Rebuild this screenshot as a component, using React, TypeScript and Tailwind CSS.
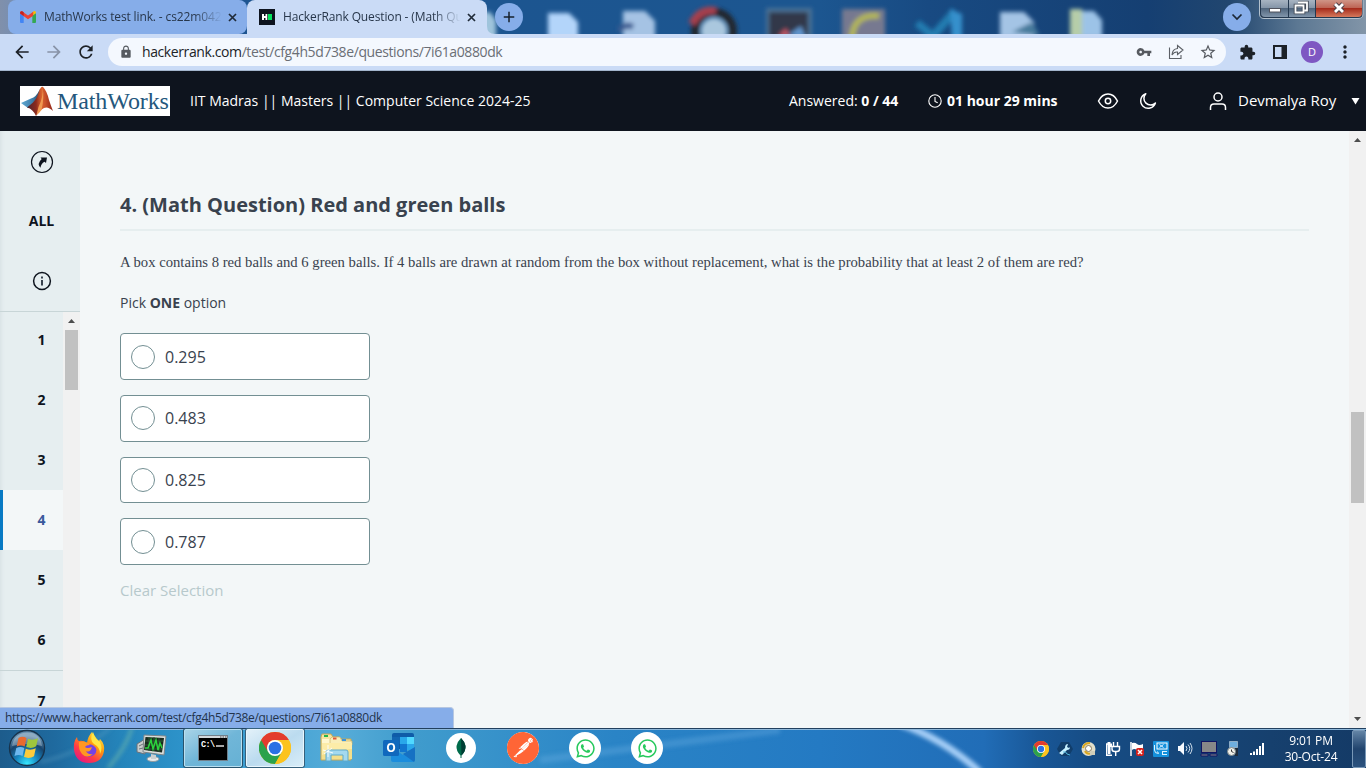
import React from "react";
import {
  MdArrowBack,
  MdArrowForward,
  MdRefresh,
  MdLock,
  MdVpnKey,
  MdStarBorder,
  MdExtension,
  MdMoreVert,
  MdAdd,
} from "react-icons/md";
import { FaWhatsapp } from "react-icons/fa";
import { SiPostman } from "react-icons/si";

const UI = "font-['Open_Sans','Noto_Sans',sans-serif]";

/* ---------- Desktop behind the tab strip ---------- */

function Wallpaper() {
  return (
    <svg className="absolute inset-0" width="1366" height="34" viewBox="0 0 1366 34" preserveAspectRatio="none">
      <defs>
        <linearGradient id="wall" x1="0" x2="1" y1="0" y2="0">
          <stop offset="0" stopColor="#8090ab" />
          <stop offset="0.02" stopColor="#6f8db8" />
          <stop offset="0.17" stopColor="#1d5490" />
          <stop offset="0.36" stopColor="#1c5590" />
          <stop offset="0.6" stopColor="#1c5690" />
          <stop offset="0.68" stopColor="#184a82" />
          <stop offset="0.84" stopColor="#153f72" />
          <stop offset="0.9" stopColor="#21466f" />
          <stop offset="0.95" stopColor="#5c7893" />
          <stop offset="1" stopColor="#8295a8" />
        </linearGradient>
        <filter id="soft" x="-20%" y="-20%" width="140%" height="140%">
          <feGaussianBlur stdDeviation="2.1" />
        </filter>
      </defs>
      <rect width="1366" height="34" fill="url(#wall)" />
      <g filter="url(#soft)">
        <path d="M478 12h12l6 8v18h-18z" fill="#9fc4dc" />
        <path d="M548 13h21l9 9v18h-30z" fill="#b3d5fa" />
        <path d="M623 11h22l10 10v19h-32z" fill="#a5c3e4" />
        <path d="M619 31q6-8 14-4" stroke="#3b5c92" strokeWidth="6" fill="none" />
        <circle cx="714" cy="31" r="19" fill="none" stroke="#22252f" strokeWidth="8" />
        <path d="M692 24q8-16 24-13" fill="none" stroke="#a63f4d" strokeWidth="8" />
        <circle cx="714" cy="31" r="13" fill="#aac7de" />
        <rect x="766" y="8" width="46" height="32" fill="#4b7296" />
        <rect x="769" y="12" width="39" height="26" fill="#303948" />
        <path d="M778 36l8-8 4 9z" fill="#c25766" />
        <path d="M788 35l13-9 5 12z" fill="#6195cf" />
        <rect x="842" y="9" width="43" height="30" fill="#777990" />
        <path d="M852 38q1-24 27-22" fill="none" stroke="#b3b657" strokeWidth="6" />
        <path d="M917 23l16 13 22-25" fill="none" stroke="#217bb0" strokeWidth="8" />
        <path d="M950 9l12 5v25h-10z" fill="#3590cc" />
        <path d="M1000 12h24l10 10v16h-34z" fill="#a4c4e5" />
        <path d="M1012 32l20-10 8 14z" fill="#477a9c" />
        <path d="M1070 9h12v29h-12z" fill="#b6cda9" />
        <path d="M1082 11h12l8 9v18h-20z" fill="#9cc3e7" />
      </g>
    </svg>
  );
}

function GmailIcon() {
  return (
    <svg width="16" height="12" viewBox="0 0 16 12">
      <path d="M0 2v9q0 1 1 1h2.700V4.800z" fill="#4285f4" />
      <path d="M16 2v9q0 1-1 1h-2.700V4.800z" fill="#34a853" />
      <path d="M12.300 1.200V4.800L16 2q0-2.500-2.300-1.800z" fill="#fbbc04" />
      <path d="M0 2q0-2.500 2.300-1.600L8 4.600 13.200.8v3.900L8 8.300 0 2.600z" fill="#ea4335" />
      <path d="M0 1.800Q.2-.4 2.300.3L3.700 1.300v3.600L0 2.300z" fill="#c5221f" />
    </svg>
  );
}

function HackerRankIcon() {
  return (
    <svg width="16" height="16" viewBox="0 0 16 16">
      <rect width="16" height="16" fill="#0e141e" />
      <path d="M3 5h2v2h1.500V5h1.800v6H6.500V9H5v2H3z" fill="#fff" />
      <rect x="9" y="5" width="4" height="6" fill="#05e35e" />
    </svg>
  );
}

function Tab({ icon, title, active }: { icon: React.ReactNode; title: string; active?: boolean }) {
  return (
    <div
      className={
        active
          ? "relative flex h-[34px] w-[240px] items-center rounded-t-lg bg-[#cadbf6] pl-3"
          : "relative flex h-[34px] w-[239px] items-center rounded-t-lg rounded-b-lg bg-[#86ade9] pl-3"
      }
    >
      <span className="flex w-4 justify-center">{icon}</span>
      <span
        className={`ml-2 w-[178px] whitespace-nowrap text-[12px] tracking-[-0.13px] text-[#27364a] [mask-image:linear-gradient(to_right,black_84%,transparent)] ${UI}`}
      >
        {title}
      </span>
      <svg className="ml-[6px] shrink-0" width="9" height="9" viewBox="0 0 9 9">
        <path d="M1 1l7 7M8 1L1 8" stroke="#1f2a38" strokeWidth="1.700" />
      </svg>
      {active && (
        <svg className="absolute -right-2 bottom-0" width="8" height="8">
          <path d="M0 0q0 8 8 8H0z" fill="#cadbf6" />
        </svg>
      )}
    </div>
  );
}

function WindowButtons() {
  return (
    <svg className="absolute right-[2px] top-0" width="105" height="20" viewBox="0 0 105 20">
      <defs>
        <linearGradient id="glass" x2="0" y2="1">
          <stop offset="0" stopColor="#a8b4c2" />
          <stop offset="0.45" stopColor="#8596a9" />
          <stop offset="0.5" stopColor="#50657d" />
          <stop offset="1" stopColor="#8296ab" />
        </linearGradient>
        <linearGradient id="close" x2="0" y2="1">
          <stop offset="0" stopColor="#cf9587" />
          <stop offset="0.45" stopColor="#be6555" />
          <stop offset="0.5" stopColor="#a62c1c" />
          <stop offset="1" stopColor="#d5795c" />
        </linearGradient>
      </defs>
      <path d="M.5 0v14q0 4.500 4.500 4.500h94q5 0 5-4.500V0" fill="#24384f" stroke="#b3c1ce" />
      <path d="M2 0h27v17H6q-4 0-4-4z" fill="url(#glass)" />
      <path d="M30 0h26v17H30z" fill="url(#glass)" />
      <path d="M57 0h46v13q0 4-4 4H57z" fill="url(#close)" />
      <rect x="10.500" y="8.500" width="11" height="3.500" fill="#fff" stroke="#50535d" />
      <path d="M39 2.500h9v8h-2.500M36.500 5.500h8v7h-8z" fill="none" stroke="#444c58" strokeWidth="3.600" />
      <path d="M39 2.500h9v8h-2.500M36.500 5.500h8v7h-8z" fill="none" stroke="#fff" strokeWidth="1.800" />
      <path d="M76 4l8 8M84 4l-8 8" stroke="#4d4048" strokeWidth="4.800" />
      <path d="M76 4l8 8M84 4l-8 8" stroke="#fff" strokeWidth="2.800" />
    </svg>
  );
}

function TabStrip() {
  return (
    <div className="relative h-[34px] shrink-0 overflow-hidden">
      <Wallpaper />
      <div className="relative flex h-full items-center pl-2">
        <Tab icon={<GmailIcon />} title="MathWorks test link. - cs22m042" />
        <Tab icon={<HackerRankIcon />} title="HackerRank Question - (Math Qu" active />
        <span className="ml-2 flex size-7 items-center justify-center rounded-full bg-[#86ade9]">
          <MdAdd className="size-[18px] text-[#16202d]" />
        </span>
        <span className="ml-auto mr-[115px] flex size-7 items-center justify-center rounded-full bg-[#86ade9]">
          <svg width="12" height="8" viewBox="0 0 12 8">
            <path d="M1.500 1.500L6 6l4.500-4.500" fill="none" stroke="#1b2735" strokeWidth="1.700" />
          </svg>
        </span>
      </div>
      <WindowButtons />
    </div>
  );
}

function Toolbar() {
  return (
    <div className="flex h-[37px] shrink-0 items-center border-b border-[#a3b5cd] bg-[#cadbf6] pl-3">
      <MdArrowBack className="size-5 text-[#1c2127]" />
      <MdArrowForward className="ml-3 size-5 text-[#8893a7]" />
      <MdRefresh className="ml-3 size-5 text-[#1c2127]" />
      <div className="ml-3 flex h-7 w-[1118px] items-center rounded-full bg-[#f4f8fe] pl-[11px] pr-[9px]">
        <MdLock className="size-[14px] text-[#565a60]" />
        <span className={`ml-[9px] whitespace-nowrap text-[14px] leading-5 tracking-[-0.4px] text-[#6a6e75] ${UI}`}>
          <span className="text-[#202327]">hackerrank.com</span>/test/cfg4h5d738e/questions/7i61a0880dk
        </span>
        <MdVpnKey className="ml-auto size-4 text-[#565a60]" />
        <svg className="ml-4" width="16" height="16" viewBox="0 0 16 16" fill="none" stroke="#5c6066" strokeWidth="1.100">
          <path d="M1.500 3.500v11h11.500V11" />
          <path d="M9.500 1.500l5.500 4.500-5.500 4.500V8Q6 7.500 4 11q.3-6 5.500-6.500z" />
        </svg>
        <MdStarBorder className="ml-[15px] size-[18px] text-[#565a60]" />
      </div>
      <MdExtension className="ml-[13px] size-[17px] text-[#1c2127]" />
      <svg className="ml-[17px]" width="14" height="14" viewBox="0 0 14 14">
        <path d="M0 0h14v14H0zM2 2v10h6.500V2z" fill="#1c2127" fillRule="evenodd" />
      </svg>
      <span className={`ml-[14px] flex size-[22px] items-center justify-center rounded-full bg-[#7e57c2] text-[11px] text-white ${UI}`}>
        D
      </span>
      <MdMoreVert className="ml-3 size-5 text-[#1c2127]" />
    </div>
  );
}

/* ---------- Test header ---------- */

function MathWorksLogo() {
  return (
    <div className="flex h-[30px] w-[150px] items-center overflow-hidden bg-white">
      <svg className="shrink-0" width="37" height="30" viewBox="0 0 37 30">
        <defs>
          <linearGradient id="peak" x2="1">
            <stop offset="0" stopColor="#4a2530" />
            <stop offset="0.35" stopColor="#8c2a1e" />
            <stop offset="0.55" stopColor="#d9632f" />
            <stop offset="0.7" stopColor="#c9512a" />
            <stop offset="1" stopColor="#8f2317" />
          </linearGradient>
          <linearGradient id="wing" x2="1">
            <stop offset="0" stopColor="#5fa9d3" />
            <stop offset="0.6" stopColor="#3f7fac" />
            <stop offset="1" stopColor="#2c4a66" />
          </linearGradient>
        </defs>
        <path d="M1 17l10-4.500q5-1 9-9.500l-2 12-10 7z" fill="url(#wing)" />
        <path d="M7 21.500l6-5q4-4 6-11Q21 0 23 1q4 4 6 13 2 6 4 11-5-5-9-3-4 2-8 8-3-7-9-8.500z" fill="url(#peak)" />
        <path d="M22.500 1q1 10-4 20l-2 8q3-2 5-5 3-12 1-23z" fill="#f09a52" />
      </svg>
      <span className="whitespace-nowrap font-['Liberation_Serif',serif] text-[24px] leading-[30px] tracking-[-0.1px] text-[#24577d]">
        MathWorks
      </span>
    </div>
  );
}

function TestHeader() {
  return (
    <header className={`flex h-[60px] shrink-0 items-center bg-[#0e141e] pl-5 text-[14px] text-white ${UI}`}>
      <MathWorksLogo />
      <span className="ml-5 w-[599px] whitespace-nowrap pb-[2px]">IIT Madras || Masters || Computer Science 2024-25</span>
      <span className="w-[139px] whitespace-nowrap pb-[2px]">
        Answered: <b>0 / 44</b>
      </span>
      <svg width="14" height="14" viewBox="0 0 14 14" fill="none" stroke="#fff" strokeWidth="1.100">
        <circle cx="7" cy="7" r="6.200" />
        <path d="M7 3v4.500l2.700 1.300" />
      </svg>
      <b className="ml-[5px] w-[150px] whitespace-nowrap pb-[2px]">01 hour 29 mins</b>
      <svg width="22" height="18" viewBox="0 0 22 18" fill="none" stroke="#fff" strokeWidth="1.500">
        <path d="M1.500 9Q5 2 11 2t9.500 7Q17 16 11 16T1.500 9z" />
        <circle cx="11" cy="9" r="2.700" />
      </svg>
      <svg className="ml-5" width="18" height="18" viewBox="0 0 18 18" fill="none" stroke="#fff" strokeWidth="1.500" strokeLinejoin="round">
        <path d="M6.800 1.700A7.500 7.500 0 1 0 16.400 11 6.600 6.600 0 0 1 6.800 1.700z" />
      </svg>
      <svg className="ml-[51px]" width="20" height="20" viewBox="0 0 20 20" fill="none" stroke="#fff" strokeWidth="1.500">
        <circle cx="10" cy="6" r="4" />
        <path d="M2.500 19v-2.500q0-3.500 3.500-3.500h8q3.500 0 3.500 3.500V19" />
      </svg>
      <span className="ml-[10px] w-[113px] whitespace-nowrap pb-[2px] text-[15px]">Devmalya Roy</span>
      <svg width="9" height="8" viewBox="0 0 9 8">
        <path d="M.5 1h8L4.500 7.500z" fill="#fff" />
      </svg>
    </header>
  );
}

/* ---------- Sidebar and question ---------- */

function Arrow({ down }: { down?: boolean }) {
  return (
    <svg width="7" height="4" viewBox="0 0 7 4" className="shrink-0">
      <path d={down ? "M0 0h7L3.500 4z" : "M0 4h7L3.500 0z"} fill="#4d4d4d" />
    </svg>
  );
}

function Sidebar() {
  return (
    <nav
      className={`flex w-20 shrink-0 flex-col overflow-hidden bg-[#e6eef0] text-[14px] font-bold text-[#0e141e] shadow-[inset_5px_0_4px_-4px_#d5dfe2] ${UI}`}
    >
      <div className="flex h-[181px] shrink-0 flex-col items-center border-b border-[#c8d5d7] pl-[3px]">
        <div className="flex h-[62px] items-center">
          <svg width="24" height="24" viewBox="0 0 24 24">
            <circle cx="12" cy="12" r="10.500" fill="none" stroke="#0e141e" strokeWidth="1.200" />
            <path d="M10.500 7.500h6.500l-1 5.500-1.500-1.300q-3.500 1.800-4 6-4-4 1.200-8.700z" fill="#0e141e" />
          </svg>
        </div>
        <div className="flex h-[56px] items-center">ALL</div>
        <div className="flex h-[63px] items-center pt-[2px]">
          <svg width="20" height="20" viewBox="0 0 20 20">
            <circle cx="10" cy="10" r="8.400" fill="none" stroke="#0e141e" strokeWidth="1.500" />
            <path d="M9 5.500h2v2H9zM9 9h2v5.500H9z" fill="#39424e" />
          </svg>
        </div>
      </div>
      <div className="flex min-h-0 flex-1">
        <ol className="-mt-[2px] flex w-[63px] flex-col">
          {[1, 2, 3, 4, 5, 6, 7].map((n) => (
            <li
              key={n}
              className={
                n === 4
                  ? "flex h-[60px] shrink-0 items-center justify-center border-l-[3px] border-[#087ac4] bg-[#f3f7f8] pb-[2px] pl-[17px] text-[#39599c]"
                  : n === 7
                    ? "flex h-[61px] shrink-0 items-center justify-center border-t border-[#c8d5d7] pb-[2px] pl-5"
                    : "flex h-[60px] shrink-0 items-center justify-center pb-[2px] pl-5"
              }
            >
              {n}
            </li>
          ))}
        </ol>
        <div className="flex w-[17px] flex-col items-center bg-[#f1f1f1] pt-[7px]">
          <Arrow />
          <span className="mt-[7px] h-[60px] w-[13px] bg-[#c1c1c1]" />
        </div>
      </div>
    </nav>
  );
}

function Question() {
  return (
    <main className={`flex-1 bg-[#f3f7f8] pl-10 pr-10 pt-[58px] text-[#39424e] ${UI}`}>
      <h1 className="h-[42px] w-[1189px] border-b-2 border-[#e6eeef] text-[20px] font-bold leading-8">
        4. (Math Question) Red and green balls
      </h1>
      <p className="mt-5 whitespace-nowrap font-['Liberation_Serif',serif] text-[14.68px] leading-[22px]">
        A box contains 8 red balls and 6 green balls. If 4 balls are drawn at random from the box without replacement, what is
        the probability that at least 2 of them are red?
      </p>
      <p className="mt-[19px] text-[14px] leading-[22px]">
        Pick <b>ONE</b> option
      </p>
      <ul className="mt-[19.200px] flex flex-col gap-[15px]">
        {["0.295", "0.483", "0.825", "0.787"].map((v) => (
          <li key={v} className="flex h-[46.700px] w-[250px] items-center rounded-[4px] border border-[#738f93] bg-white pl-[10px]">
            <span className="size-6 rounded-full border border-[#738f93]" />
            <span className="ml-[10px] text-[16px] leading-6">{v}</span>
          </li>
        ))}
      </ul>
      <button className="mt-[13.800px] block text-[15px] leading-[22px] text-[#b7c9cc]">Clear Selection</button>
    </main>
  );
}

/* ---------- Taskbar ---------- */

function TaskbarBackground() {
  return (
    <svg className="absolute inset-0" width="1366" height="40" viewBox="0 0 1366 40">
      <defs>
        <linearGradient id="bar" x1="0" x2="1">
          <stop offset="0" stopColor="#1d5c8c" />
          <stop offset="0.04" stopColor="#1f6a9f" />
          <stop offset="0.09" stopColor="#2585bb" />
          <stop offset="0.15" stopColor="#3098cf" />
          <stop offset="0.25" stopColor="#56acd8" />
          <stop offset="0.3" stopColor="#409ccd" />
          <stop offset="0.45" stopColor="#2a84c6" />
          <stop offset="0.6" stopColor="#247ac3" />
          <stop offset="0.72" stopColor="#216db7" />
          <stop offset="0.76" stopColor="#195797" />
          <stop offset="0.8" stopColor="#164c84" />
          <stop offset="0.93" stopColor="#16406e" />
          <stop offset="1" stopColor="#143a66" />
        </linearGradient>
        <filter id="glow" x="-20%" y="-50%" width="140%" height="200%">
          <feGaussianBlur stdDeviation="2" />
        </filter>
      </defs>
      <rect width="1366" height="40" fill="url(#bar)" />
      <g filter="url(#glow)" fill="none">
        <path d="M40 34q40-8 70-34" stroke="#65a6c8" strokeWidth="2" opacity="0.6" />
        <path d="M108 40q18-20 24-40" stroke="#8fd0a5" strokeWidth="3" opacity="0.5" />
        <path d="M540 32q130-16 240-30" stroke="#6cb3e6" strokeWidth="7" opacity="0.35" />
        <path d="M900-4q42 14 80 48" stroke="#a9d0f8" strokeWidth="7" />
      </g>
      <path d="M0 .5h1366" stroke="#22405f" />
      <path d="M0 1.500h1366" stroke="#8db8db" />
    </svg>
  );
}

function StartOrb() {
  return (
    <svg width="38" height="38" viewBox="0 0 38 38">
      <defs>
        <radialGradient id="orb" cx="0.5" cy="0.95" r="0.8">
          <stop offset="0" stopColor="#37e9ff" />
          <stop offset="0.4" stopColor="#1687c2" />
          <stop offset="0.75" stopColor="#17446d" />
          <stop offset="1" stopColor="#5d87a8" />
        </radialGradient>
      </defs>
      <circle cx="19" cy="19" r="17.500" fill="url(#orb)" stroke="#17334c" strokeWidth="1.400" />
      <path d="M4 17Q6 4 19 3.500T34 17q-14-4-30 0z" fill="#fff" opacity="0.3" />
      <path d="M10.500 9q4-2.500 8 0l-1.800 8.500q-4-2-8 0z" fill="#e96a2f" />
      <path d="M20 9.800q5 2 10-.5l-1.800 8q-4.500 2.700-10 .8z" fill="#9fc63d" />
      <path d="M8.300 19q4-2 8 0l-1.800 8q-3.600-2-8 0z" fill="#6db7ee" />
      <path d="M17.800 19.800q5 2 10-.5l-1.800 8q-4.500 2.700-10 .8z" fill="#fbcb3c" />
    </svg>
  );
}

function FirefoxIcon() {
  return (
    <svg width="32" height="32" viewBox="0 0 32 32">
      <defs>
        <linearGradient id="fox" x1="0.9" y1="0" x2="0.2" y2="1">
          <stop offset="0" stopColor="#fff44f" />
          <stop offset="0.4" stopColor="#ff980e" />
          <stop offset="0.7" stopColor="#ff3b47" />
          <stop offset="1" stopColor="#e31587" />
        </linearGradient>
      </defs>
      <path d="M1 18Q0 10 4 5q0 3 2 4 4-1 8 2 1-7 5-11 2 6 7 9l1-2q5 5 4 12-2 12-15 12T1 18z" fill="url(#fox)" />
      <path d="M11 15q5-5 10-1t0 9q-6 4-11-1z" fill="#7542e5" />
      <path d="M6 10q7-2 11 3-4 0-5 2 2 2 7 0-2 6-6 4 2 4 7 3-6 5-11 0-4-5-3-12z" fill="#ff9722" />
      <path d="M20 0q2 6 7 10 3 6 0 12 0-7-6-10-5-4-1-12z" fill="#ffe645" />
    </svg>
  );
}

function MonitorIcon() {
  return (
    <svg width="32" height="30" viewBox="0 0 32 30">
      <path d="M2 11l8-5v15l-8-2z" fill="#c9cdcd" stroke="#68717a" />
      <path d="M4 13l4-2M4 16l4-1" stroke="#6b7478" />
      <path d="M9 2l22 1-2 19-21-3z" fill="#dbdedb" stroke="#7b8488" />
      <path d="M10.500 4l18.500 1-2 14.500-18-2.500z" fill="#1a2a1e" />
      <path d="M10 8h18M10 12h18M10 16h17M14 4v14M19 4v14M24 5v14" stroke="#2c5b39" />
      <path d="M10 15h3l3-8 2 9 3-9 2 10 2-7 2 5" fill="none" stroke="#2bd33c" strokeWidth="1.500" />
      <ellipse cx="18" cy="26" rx="6" ry="2.500" fill="#e7e9e9" stroke="#919a9f" />
      <path d="M16 21l5 1v4h-5z" fill="#cbd0d1" />
    </svg>
  );
}

function TerminalIcon() {
  return (
    <svg width="30" height="26" viewBox="0 0 30 26">
      <rect x=".5" y=".5" width="29" height="25" fill="#000" stroke="#72808b" />
      <path d="M1 1h28v2H1z" fill="#d3d9dd" />
      <path d="M22 2h1.500M24.500 2H26M27 2h1.500" stroke="#555" />
      <text x="3" y="12" fill="#fff" fontSize="8.500" fontWeight="bold" fontFamily="Liberation Mono, monospace" textLength="14">C:\</text>
      <path d="M18 11h8" stroke="#fff" strokeWidth="1.300" />
    </svg>
  );
}

function ChromeIcon({ size }: { size: number }) {
  return (
    <svg width={size} height={size} viewBox="0 0 32 32">
      <circle cx="16" cy="16" r="16" fill="#fcc31e" />
      <path d="M2.140 8A16 16 0 0 0 16 32L22.900 20 16 16z" fill="#2ba24c" />
      <path d="M16 8h13.860A16 16 0 0 1 16 32l6.930-12z" fill="#fcc31e" />
      <path d="M2.140 8A16 16 0 0 1 29.860 8H16a8 8 0 0 0-6.930 12z" fill="#e33b2e" />
      <circle cx="16" cy="16" r="8" fill="#fff" />
      <circle cx="16" cy="16" r="6.300" fill="#2a71e4" />
    </svg>
  );
}

function FolderIcon() {
  return (
    <svg width="34" height="30" viewBox="0 0 34 30">
      <path d="M1 4l1-3h9l2 3h6l2 2h10v21H1z" fill="#f5e5a0" stroke="#c4a757" />
      <path d="M2 6h12v4H2z" fill="#fff7cf" />
      <path d="M4 2h4v2H4z" fill="#23b64b" />
      <path d="M10 6l2-2h8l2 4h10v4H10z" fill="#f9eeb9" stroke="#cdb468" strokeWidth=".7" />
      <path d="M13 4.500h3.500v2H13z" fill="#e05a3b" />
      <path d="M22 6h4v2h-4z" fill="#3d94dc" />
      <path d="M2 10h30v16H2z" fill="#f4df8b" />
      <path d="M2 10h30v6q-16 0-30 6z" fill="#fff1b5" opacity=".7" />
      <path d="M6 28v-9q0-2 2-2h18q2 0 2 2v9h-5v-6H11v6z" fill="#a4d9ef" stroke="#5faacb" />
      <path d="M8 12v12M3 17l10 3M4 21l8-6" stroke="#fff" strokeWidth=".9" />
    </svg>
  );
}

function OutlookIcon() {
  return (
    <svg width="32" height="30" viewBox="0 0 32 30">
      <path d="M9 2q0-2 2-2h18q2 0 2 2v14H9z" fill="#0f5ca8" />
      <path d="M9 4h8v7H9z" fill="#1266b2" />
      <path d="M17 4h7v7h-7z" fill="#29a8ea" />
      <path d="M24 4h7v7h-7z" fill="#50d9ff" />
      <path d="M17 11h7v8h-7z" fill="#1176cf" />
      <path d="M24 11h7v6h-7z" fill="#2aa8eb" />
      <path d="M8 14l12 8 12-8v12q0 3-3 3H10q-2 0-2-2z" fill="#1b8ddd" />
      <path d="M20 21l12-7v12q0 2-1 3z" fill="#1671c3" />
      <rect y="7" width="16" height="16" rx="1.500" fill="#1068bd" />
      <text x="8" y="19" textAnchor="middle" fill="#fff" fontSize="12" fontWeight="bold" fontFamily="Open Sans, sans-serif">O</text>
    </svg>
  );
}

function MongoIcon() {
  return (
    <span className="flex size-[30px] items-center justify-center rounded-full bg-white">
      <svg width="10" height="20" viewBox="0 0 10 20">
        <path d="M5 0q4 4 4.500 8 .5 5-4 9.500v2.500h-1v-2.500Q0 13 .5 8 1 4 5 0z" fill="#006b4b" />
        <path d="M5 0q4 4 4.500 8 .5 5-4 9.500z" fill="#003e34" />
      </svg>
    </span>
  );
}

function WhatsAppIcon() {
  return (
    <span className="flex size-8 items-center justify-center rounded-full bg-white">
      <FaWhatsapp className="size-[21px] text-[#27c95d]" />
    </span>
  );
}

function TaskButton({ children, running, focused }: { children: React.ReactNode; running?: boolean; focused?: boolean }) {
  return (
    <div className="flex h-full w-[62px] shrink-0 items-center justify-center">
      <div
        className={
          focused
            ? "flex h-[38px] w-[58px] items-center justify-center rounded-[2px] border border-[#e9f6fd] bg-gradient-to-br from-[#e2f1f9] via-[#bbdbef] to-[#d8edf8] shadow-[0_0_0_1px_#36617d]"
            : running
              ? "flex h-[38px] w-[58px] items-center justify-center rounded-[2px] border border-[#b9dff0] bg-gradient-to-br from-[#a8d3e7] via-[#70b6d8] to-[#66b1d4] shadow-[0_0_0_1px_#28536d]"
              : "flex h-[38px] w-[58px] items-center justify-center"
        }
      >
        {children}
      </div>
    </div>
  );
}

function Tray() {
  const cell = "flex w-6 shrink-0 items-center justify-center";
  return (
    <div className="ml-auto flex h-full items-center pt-[1px]">
      <span className={cell}><ChromeIcon size={16} /></span>
      <span className={cell}>
        <svg width="16" height="16" viewBox="0 0 16 16">
          <path d="M4 1h8l4 7-4 7H4L0 8z" fill="#113e6b" />
          <path d="M2 12l6-5q0-4 3-4l-1 3 2 1 1-1q0 3-3 3l-5 5z" fill="#c6f0ff" />
          <path d="M6 11q3-1 4 2l3 1" stroke="#52b6dc" fill="none" />
        </svg>
      </span>
      <span className={cell}>
        <svg width="16" height="16" viewBox="0 0 16 16">
          <circle cx="7.500" cy="8" r="7" fill="#e4e0ca" />
          <path d="M2 7q1-5 7-5M4 10q2 4 7 2" stroke="#d9a721" strokeWidth="2" fill="none" />
          <circle cx="7.500" cy="7.500" r="3" fill="#fff" stroke="#8c7c58" />
          <path d="M9 10h5v4H9z" fill="#d1ceb9" />
        </svg>
      </span>
      <span className={cell}>
        <svg width="16" height="16" viewBox="0 0 16 16">
          <path d="M3.500 3H1.700v11.300H7" fill="none" stroke="#fff" strokeWidth="1.400" />
          <path d="M2.500 1h3v1.500h1.500V6H5.500v7H3z" fill="#fff" />
          <path d="M8.500 1v4M12.500 1v4M7 5.500h7.500V8q0 2.500-2.500 2.500H9.500Q7 10.500 7 8zM10.700 10.500v4.500" fill="none" stroke="#fff" strokeWidth="1.400" />
        </svg>
      </span>
      <span className={cell}>
        <svg width="16" height="16" viewBox="0 0 16 16">
          <path d="M2 1v14" stroke="#fff" strokeWidth="1.500" />
          <path d="M3 2q3-1 5 1t6 0v6q-3 2-6 0T3 9z" fill="#fff" />
          <rect x="7" y="7" width="8" height="8" rx="2" fill="#d5201c" />
          <path d="M9 9l4 4M13 9l-4 4" stroke="#fff" strokeWidth="1.500" />
        </svg>
      </span>
      <span className={cell}>
        <svg width="16" height="16" viewBox="0 0 16 16">
          <rect width="16" height="16" rx="1" fill="#1490dc" />
          <rect x="4" y="2" width="10" height="6" fill="none" stroke="#fff" />
          <path d="M6.500 3.500l4 3M10.500 3.500l-4 3M1.500 4v5q0 3.500 4 3.500l-1-2M9 10.500h5M9 13.500h5M9.500 10v4" stroke="#dff3ff" fill="none" />
        </svg>
      </span>
      <span className={cell}>
        <svg width="16" height="16" viewBox="0 0 16 16">
          <path d="M1 5h2l4-4v13L3 10H1z" fill="#f7faff" />
          <path d="M9 5q2 2.500 0 5M11 3.500q3.500 4 0 8M13 2q4 5.500 0 11" stroke="#d6e3ef" fill="none" />
        </svg>
      </span>
      <span className={cell}>
        <svg width="18" height="16" viewBox="0 0 18 16">
          <rect x="1.500" y=".5" width="15" height="11" fill="#888" stroke="#111664" />
          <path d="M1 13h7v2H1zM10 13h7v2h-7z" fill="#888" stroke="#111664" />
        </svg>
      </span>
      <span className={cell}>
        <svg width="14" height="16" viewBox="0 0 14 16">
          <path d="M3 0h9v14H5z" fill="#3a5878" />
          <path d="M3.500 .5h8v6h-8z" fill="#6eaede" stroke="#b6cbdc" strokeWidth=".6" />
          <path d="M9 7h3v8H9z" fill="#1e2c3c" />
          <circle cx="5.500" cy="10.500" r="4" fill="#f1f1ea" stroke="#7c8788" />
          <path d="M5.500 8.500v2l2 1" stroke="#333" fill="none" />
        </svg>
      </span>
      <span className={cell}>
        <svg width="16" height="12" viewBox="0 0 16 12">
          <path d="M1 10h2v2H1zM4 8.500h2V12H4zM7 6h2v6H7zM10 3h2v9h-2zM13 0h2v12h-2z" fill="#fff" />
        </svg>
      </span>
      <div className={`ml-[2px] w-[81px] pr-px pt-px text-center text-[12px] leading-4 tracking-[-0.2px] text-white ${UI}`}>
        <div>9:01 PM</div>
        <div>30-Oct-24</div>
      </div>
      <div className="h-[38px] w-[14px] rounded-[2px] border border-[#7998b7] bg-gradient-to-b from-[#6485a6] via-[#21446e] to-[#2b527e]" />
    </div>
  );
}

function Taskbar() {
  return (
    <div className="relative h-10 shrink-0 overflow-hidden">
      <TaskbarBackground />
      <div className="relative flex h-full items-center">
        <div className="flex w-[58px] justify-center pr-[4px]"><StartOrb /></div>
        <TaskButton><FirefoxIcon /></TaskButton>
        <TaskButton><MonitorIcon /></TaskButton>
        <TaskButton running><TerminalIcon /></TaskButton>
        <TaskButton focused><ChromeIcon size={32} /></TaskButton>
        <TaskButton><FolderIcon /></TaskButton>
        <TaskButton><OutlookIcon /></TaskButton>
        <TaskButton><MongoIcon /></TaskButton>
        <TaskButton>
          <span className="flex size-8 items-center justify-center rounded-full bg-white">
            <SiPostman className="size-8 shrink-0 text-[#ff6536]" />
          </span>
        </TaskButton>
        <TaskButton><WhatsAppIcon /></TaskButton>
        <TaskButton><WhatsAppIcon /></TaskButton>
        <Tray />
      </div>
    </div>
  );
}

export default function App() {
  return (
    <div className="flex h-[768px] w-[1366px] flex-col overflow-hidden bg-[#f3f7f8]">
      <TabStrip />
      <Toolbar />
      <TestHeader />
      <div className="relative flex min-h-0 flex-1">
        <Sidebar />
        <Question />
        <div className="flex w-[17px] shrink-0 flex-col items-center bg-[#f1f1f1] py-[7px]">
          <Arrow />
          <span className="mt-[270px] h-[91px] w-[13px] bg-[#c1c1c1]" />
          <span className="mt-auto flex"><Arrow down /></span>
        </div>
        <div
          className={`absolute bottom-0 left-0 flex h-[21px] w-[454px] items-center whitespace-nowrap rounded-tr-[4px] border-r border-t border-[#b6c7e1] bg-[#86ade9] pl-[5px] text-[12px] tracking-[-0.34px] text-[#22334b] ${UI}`}
        >
          https://www.hackerrank.com/test/cfg4h5d738e/questions/7i61a0880dk
        </div>
      </div>
      <Taskbar />
    </div>
  );
}
